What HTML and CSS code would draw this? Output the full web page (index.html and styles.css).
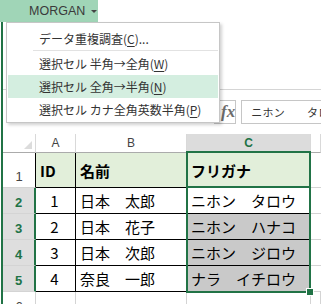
FILE: index.html
```html
<!DOCTYPE html>
<html lang="ja">
<head>
<meta charset="utf-8">
<title>MORGAN</title>
<link rel="stylesheet" href="styles.css">
</head>
<body>
<div class="app">
  <div class="ribbon">
    <div class="tab">MORGAN <span class="caret"></span></div>
  </div>
  <div class="work">
    <div class="fbar-area">
      <div class="fbar">
        <div class="fx">fx</div>
        <div class="finput">ニホン<span class="gap">　</span>タロウ</div>
      </div>
    </div>
    <div class="sheet">
      <div class="hd corner"><span class="tri"></span></div>
      <div class="hd col">A</div>
      <div class="hd col">B</div>
      <div class="hd col sel">C</div>
      <div class="hd col"></div>

      <div class="rh r1">1</div>
      <div class="c head">ID</div>
      <div class="c head">名前</div>
      <div class="c head">フリガナ</div>
      <div class="g"></div>

      <div class="rh sel">2</div>
      <div class="c num">1</div>
      <div class="c">日本　太郎</div>
      <div class="c">ニホン　タロウ</div>
      <div class="g"></div>

      <div class="rh sel">3</div>
      <div class="c num">2</div>
      <div class="c">日本　花子</div>
      <div class="c gray">ニホン　ハナコ</div>
      <div class="g"></div>

      <div class="rh sel">4</div>
      <div class="c num">3</div>
      <div class="c">日本　次郎</div>
      <div class="c gray">ニホン　ジロウ</div>
      <div class="g"></div>

      <div class="rh sel">5</div>
      <div class="c num">4</div>
      <div class="c">奈良　一郎</div>
      <div class="c gray">ナラ　イチロウ</div>
      <div class="g"></div>

      <div class="rh r6">6</div>
      <div class="e"></div>
      <div class="e"></div>
      <div class="e"></div>
      <div class="e"></div>

      <div class="selbox"><span class="divider"></span></div>
      <span class="handle"></span>
    </div>
  </div>
  <div class="menu">
    <div class="mi">データ重複調査(<u>C</u>)...</div>
    <div class="sep"></div>
    <div class="mi">選択セル 半角→全角(<u>W</u>)</div>
    <div class="mi hl">選択セル 全角→半角(<u>N</u>)</div>
    <div class="mi">選択セル カナ全角英数半角(<u>P</u>)</div>
  </div>
</div>
</body>
</html>
```

FILE: styles.css
```css
* { box-sizing: border-box; margin: 0; padding: 0; }
html, body { width: 321px; height: 304px; overflow: hidden; background: #fff; }
body { font-family: "Noto Sans CJK JP", "Noto Sans", sans-serif; color: #000; }

.app { position: relative; width: 321px; height: 304px; overflow: hidden; }

.ribbon { height: 22px; display: flex; }
.tab {
  width: 98px; background: #a0d5b7; display: flex; align-items: center;
  padding-left: 29px; gap: 6px;
  font: 12.5px "Liberation Sans", Arial, sans-serif; color: #3a3a3a;
}
.caret {
  width: 0; height: 0;
  border-left: 3px solid transparent; border-right: 3px solid transparent;
  border-top: 3px solid #444;
}

.work { margin-left: 1px; border-left: 2px solid #217346; height: 282px; }

.fbar-area { height: 112px; padding-top: 67px; }
.fbar {
  border-top: 1px solid #d5d5d5; padding: 10px 0 0 211px;
  display: flex; gap: 5px; height: 35px;
}
.fx {
  width: 34px; height: 24px; border: 1px solid #c6c6c6; border-left: none;
  font: italic bold 17px "Liberation Serif", serif; color: #6d6d6d;
  padding-left: 7px; line-height: 22px;
}
.finput {
  width: 80px; flex: none; height: 24px; border: 1px solid #c6c6c6; border-right: none;
  font-size: 11px; line-height: 22px; padding-left: 9px; color: #333;
  white-space: nowrap; overflow: hidden; letter-spacing: 0.3px;
}
.finput .gap { display: inline-block; width: 22px; }

.sheet {
  position: relative;
  display: grid;
  grid-template-columns: 33px 40px 111px 124px 1fr;
  grid-template-rows: 19px 35px 26px 26px 26px 26px 26px;
}

.hd {
  border-bottom: 1px solid #ababab; border-right: 1px solid #d9d9d9;
  font: 12px "Liberation Sans", Arial, sans-serif; color: #444;
  display: flex; align-items: center; justify-content: center;
}
.hd.corner { position: relative; }
.tri {
  position: absolute; right: 3px; bottom: 3px; width: 0; height: 0;
  border-left: 8px solid transparent; border-bottom: 8px solid #dcdcdc;
}
.hd.sel { background: #dcdcdc; color: #217346; font-weight: bold; }

.rh {
  border-bottom: 1px solid #d4d4d4; border-right: 1px solid #000;
  font: 13px "Liberation Sans", Arial, sans-serif; color: #444;
  display: flex; align-items: flex-end; justify-content: center; padding-bottom: 3px;
}
.rh.sel { background: #dedede; color: #217346; font-weight: bold; border-right: 2px solid #217346; }
.rh.r6 { border-right: 1px solid #d4d4d4; }

.c {
  border-right: 1px solid #000; border-bottom: 1px solid #000;
  font-size: 15px; display: flex; align-items: center; padding-left: 4px;
  white-space: nowrap; overflow: hidden;
}
.c.head { background: #e2efda; font-weight: bold; }
.c.num { justify-content: center; padding-left: 0; padding-right: 2px; }
.c.gray { background: #c9c9c9; }
.g { border-bottom: 1px solid #d4d4d4; }
.e { border-right: 1px solid #d4d4d4; }

.selbox {
  position: absolute; left: 183px; top: 17px; width: 125px; height: 142px;
  border: 2px solid #217346;
}
.divider { position: absolute; left: 0; right: 0; top: 33px; height: 2px; background: #217346; }
.handle {
  position: absolute; left: 303px; top: 154px; width: 8px; height: 8px;
  background: #217346; border: 1px solid #fff;
}

.menu {
  position: absolute; left: 6px; top: 22px; width: 214px;
  background: #fff; border: 1px solid #c6c6c6;
  padding: 4px 1px 1px 1px;
  box-shadow: 2px 2px 3px rgba(0,0,0,0.18);
}
.mi {
  height: 23px; line-height: 23px; padding-left: 31px;
  font-size: 12px; color: #333; white-space: nowrap;
}
.mi.hl { background: #d4eee0; }
.mi u { text-underline-offset: 2px; }
.sep { height: 2px; margin-left: 25px; border-top: 1px solid #e2e2e2; }
```
